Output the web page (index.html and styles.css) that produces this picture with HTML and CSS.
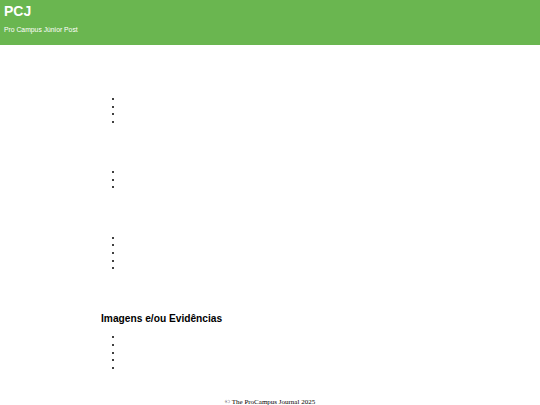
FILE: index.html
```html
<!DOCTYPE html>
<html lang="pt">
<head>
<meta charset="utf-8">
<title>PCJ</title>
<link rel="stylesheet" href="styles.css">
</head>
<body>
<header class="site-header">
  <h1 class="brand">PCJ</h1>
  <p class="tagline">Pro Campus Júnior Post</p>
</header>
<main class="content">
  <section class="block">
    <ul class="items"><li></li><li></li><li></li><li></li></ul>
  </section>
  <section class="block">
    <ul class="items"><li></li><li></li><li></li></ul>
  </section>
  <section class="block">
    <ul class="items"><li></li><li></li><li></li><li></li><li></li></ul>
  </section>
  <section class="block block-titled">
    <h2 class="block-title">Imagens e/ou Evidências</h2>
    <ul class="items"><li></li><li></li><li></li><li></li><li></li></ul>
  </section>
</main>
<footer class="site-footer">© The ProCampus Journal 2025</footer>
</body>
</html>
```
FILE: styles.css
```css
html, body {
  margin: 0;
  padding: 0;
  background: #ffffff;
}
body {
  font-family: "Liberation Sans", Arial, sans-serif;
  color: #000;
}
.site-header {
  background: #6ab650;
  color: #ffffff;
  height: 45px;
  box-sizing: border-box;
  padding: 3.3px 4px 0 4px;
}
.brand {
  margin: 0;
  font-size: 14px;
  line-height: 16px;
  font-weight: bold;
}
.tagline {
  margin: 7px 0 0 0;
  font-size: 6.8px;
  line-height: 8px;
}
.content {
  width: 338px;
  margin: 0 auto;
  padding-top: 50px;
  display: flex;
  flex-direction: column;
}
.block {
  margin-bottom: 42.5px;
}
.block:nth-child(3) {
  margin-bottom: 41.5px;
}
.block-titled {
  margin-bottom: 26px;
}
.block-title {
  margin: 0 0 7.5px 0;
  font-size: 10.2px;
  line-height: 12.6px;
  font-weight: bold;
}
.items {
  margin: 0;
  padding-left: 22px;
  font-size: 6.7px;
  line-height: 7.67px;
}
.items li {
  height: 7.67px;
}
.site-footer {
  font-family: "Liberation Serif", "Times New Roman", serif;
  font-size: 7px;
  line-height: 8px;
  text-align: center;
  color: #000;
}
```
